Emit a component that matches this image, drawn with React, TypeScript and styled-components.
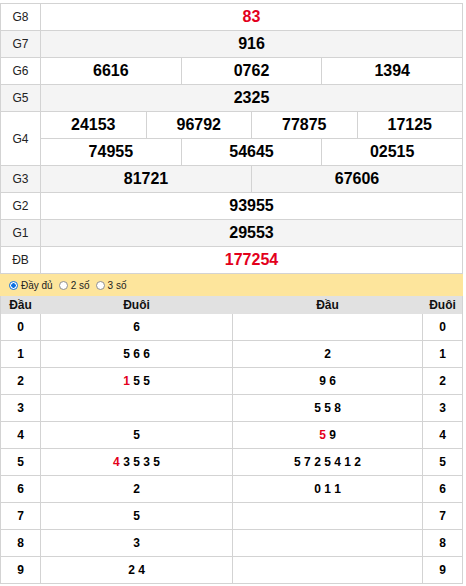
import React from "react";
import styled, { createGlobalStyle } from "styled-components";

const GlobalStyle = createGlobalStyle`
  html, body { margin: 0; padding: 0; background: #fff; }
  body { padding-top: 3px; font-family: "Liberation Sans", Arial, sans-serif; color: #000; }
  * { box-sizing: border-box; }
`;

const BORDER = "#d3d3d3";
const RED = "#e3001b";

const Wrapper = styled.div`
  width: 463px;
`;

const ResultTable = styled.div`
  border-top: 1px solid ${BORDER};
  border-left: 1px solid ${BORDER};
  border-right: 1px solid ${BORDER};
`;

const PrizeRow = styled.div<{ $alt?: boolean }>`
  display: flex;
  background: ${(p) => (p.$alt ? "#f4f4f4" : "#fff")};
  border-bottom: 1px solid ${BORDER};
`;

const PrizeLabel = styled.div`
  flex: 0 0 40px;
  border-right: 1px solid ${BORDER};
  display: flex;
  align-items: center;
  justify-content: center;
  font-size: 12px;
  color: #222;
`;

const PrizeValues = styled.div`
  flex: 1;
  display: flex;
  flex-direction: column;
`;

const SubRow = styled.div`
  display: flex;
  height: 26px;
  & + & {
    height: 27px;
    border-top: 1px solid ${BORDER};
  }
`;

const Num = styled.div<{ $red?: boolean }>`
  flex: 1;
  display: flex;
  align-items: center;
  justify-content: center;
  font-size: 16px;
  font-weight: bold;
  color: ${(p) => (p.$red ? RED : "#000")};
  & + & {
    border-left: 1px solid ${BORDER};
  }
`;

const OptionBar = styled.div`
  height: 22px;
  background: #fde59c;
  display: flex;
  align-items: center;
  padding-left: 9px;
  gap: 6px;
  font-size: 10px;
  color: #222;
`;

const Option = styled.label`
  display: flex;
  align-items: center;
  gap: 3px;
`;

const Radio = styled.input.attrs({ type: "radio" })`
  appearance: none;
  -webkit-appearance: none;
  margin: 0;
  width: 9px;
  height: 9px;
  border-radius: 50%;
  border: 1px solid #8f8f8f;
  background: #fff;
  &:checked {
    border-color: #0b6fe0;
    background: radial-gradient(circle, #0b6fe0 0 2px, #fff 2.5px);
  }
`;

const LotoTable = styled.div`
  border-left: 1px solid ${BORDER};
  border-right: 1px solid ${BORDER};
`;

const LotoHead = styled.div`
  display: flex;
  height: 18px;
  background: #e1e1e1;
`;

const LotoRow = styled.div`
  display: flex;
  height: 27px;
  border-bottom: 1px solid ${BORDER};
`;

const LotoCell = styled.div<{ $w?: number; $head?: boolean }>`
  ${(p) => (p.$w ? `flex: 0 0 ${p.$w}px;` : "flex: 1;")}
  display: flex;
  align-items: center;
  justify-content: center;
  font-size: 12px;
  font-weight: bold;
  color: ${(p) => (p.$head ? "#111" : "#000")};
  border-right: 1px solid ${(p) => (p.$head ? "transparent" : BORDER)};
  &:last-child {
    border-right: none;
  }
`;

const Digits = styled.span`
  white-space: pre;
`;

const Red = styled.span`
  color: ${RED};
`;

type Prize = { label: string; rows: string[][]; red?: boolean };

const prizes: Prize[] = [
  { label: "G8", rows: [["83"]], red: true },
  { label: "G7", rows: [["916"]] },
  { label: "G6", rows: [["6616", "0762", "1394"]] },
  { label: "G5", rows: [["2325"]] },
  { label: "G4", rows: [["24153", "96792", "77875", "17125"], ["74955", "54645", "02515"]] },
  { label: "G3", rows: [["81721", "67606"]] },
  { label: "G2", rows: [["93955"]] },
  { label: "G1", rows: [["29553"]] },
  { label: "ĐB", rows: [["177254"]], red: true },
];

type Seq = { digits: string[]; red?: number };

const leftTails: Seq[] = [
  { digits: ["6"] },
  { digits: ["5", "6", "6"] },
  { digits: ["1", "5", "5"], red: 0 },
  { digits: [] },
  { digits: ["5"] },
  { digits: ["4", "3", "5", "3", "5"], red: 0 },
  { digits: ["2"] },
  { digits: ["5"] },
  { digits: ["3"] },
  { digits: ["2", "4"] },
];

const rightHeads: Seq[] = [
  { digits: [] },
  { digits: ["2"] },
  { digits: ["9", "6"] },
  { digits: ["5", "5", "8"] },
  { digits: ["5", "9"], red: 0 },
  { digits: ["5", "7", "2", "5", "4", "1", "2"] },
  { digits: ["0", "1", "1"] },
  { digits: [] },
  { digits: [] },
  { digits: [] },
];

const renderSeq = (s: Seq) => (
  <Digits>
    {s.digits.map((d, i) => (
      <React.Fragment key={i}>
        {i > 0 ? " " : ""}
        {s.red === i ? <Red>{d}</Red> : d}
      </React.Fragment>
    ))}
  </Digits>
);

export default function App() {
  return (
    <Wrapper>
      <GlobalStyle />
      <ResultTable>
        {prizes.map((p, idx) => (
          <PrizeRow key={p.label} $alt={idx % 2 === 1}>
            <PrizeLabel>{p.label}</PrizeLabel>
            <PrizeValues>
              {p.rows.map((r, ri) => (
                <SubRow key={ri}>
                  {r.map((n) => (
                    <Num key={n} $red={p.red}>
                      {n}
                    </Num>
                  ))}
                </SubRow>
              ))}
            </PrizeValues>
          </PrizeRow>
        ))}
      </ResultTable>
      <OptionBar>
        <Option>
          <Radio name="mode" defaultChecked />
          Đầy đủ
        </Option>
        <Option>
          <Radio name="mode" />
          2 số
        </Option>
        <Option>
          <Radio name="mode" />
          3 số
        </Option>
      </OptionBar>
      <LotoTable>
        <LotoHead>
          <LotoCell $w={40} $head>Đầu</LotoCell>
          <LotoCell $w={192} $head>Đuôi</LotoCell>
          <LotoCell $w={190} $head>Đầu</LotoCell>
          <LotoCell $head>Đuôi</LotoCell>
        </LotoHead>
        {leftTails.map((t, i) => (
          <LotoRow key={i}>
            <LotoCell $w={40}>{i}</LotoCell>
            <LotoCell $w={192}>{renderSeq(t)}</LotoCell>
            <LotoCell $w={190}>{renderSeq(rightHeads[i])}</LotoCell>
            <LotoCell>{i}</LotoCell>
          </LotoRow>
        ))}
      </LotoTable>
    </Wrapper>
  );
}
